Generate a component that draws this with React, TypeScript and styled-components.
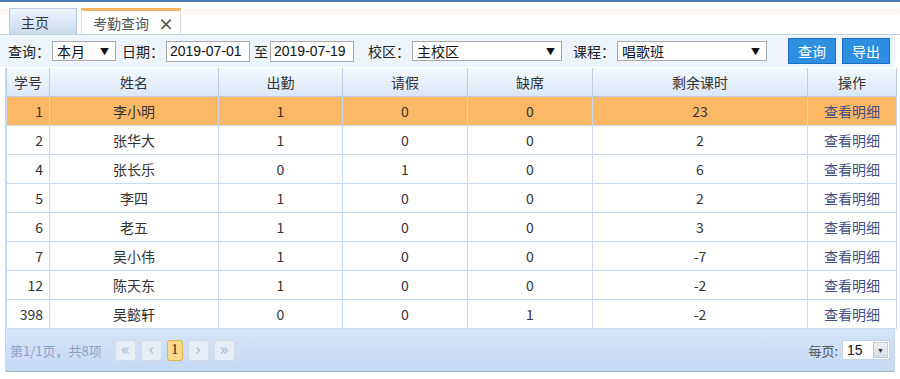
import styled, { createGlobalStyle } from 'styled-components'

const GlobalStyle = createGlobalStyle`
  body {
    margin: 0;
    background: #fff;
    font-family: "Noto Sans CJK SC", "Liberation Sans", sans-serif;
    font-size: 14px;
    color: #333;
  }
`

const Page = styled.div`
  width: 900px;
  height: 379px;
  border-top: 2px solid #4d7fb3;
  box-sizing: border-box;
  overflow: hidden;
`
const TabBar = styled.div`
  height: 32px;
  display: flex;
  align-items: flex-end;
  gap: 4px;
  padding-left: 9px;
  border-bottom: 1px solid #c3cfdc;
  background: linear-gradient(#fff 6px, #fdf6ec 8px, #fff 14px);
`
const Tab = styled.div<{ $active?: boolean }>`
  height: ${p => (p.$active ? 23 : 25)}px;
  display: flex;
  align-items: center;
  gap: 9px;
  padding: 0 ${p => (p.$active ? '6px 0 11px' : '11px')};
  box-sizing: content-box;
  border: 1px solid ${p => (p.$active ? '#d6dde6' : '#b8cce3')};
  border-bottom: none;
  border-top: ${p => (p.$active ? '3px solid #f3b463' : '1px solid #b8cce3')};
  background: ${p => (p.$active ? '#fff' : 'linear-gradient(#eef4fc, #c9dbef)')};
  color: ${p => (p.$active ? '#555' : '#333')};
  font-size: 14px;
  min-width: 44px;
`
const Close = styled.span`
  font-size: 16px;
  color: #555;
  font-weight: bold;
  line-height: 1;
`
const Toolbar = styled.div`
  height: 32px;
  display: flex;
  align-items: center;
  padding: 0 5px 0 8px;
  background: #eef4fb;
  margin-right: 5px;
`
const Label = styled.span<{ $ml?: number }>`
  margin-left: ${p => p.$ml || 0}px;
  margin-right: 2px;
  white-space: nowrap;
  color: #222;
`
const Select = styled.div<{ $w: number }>`
  width: ${p => p.$w}px;
  height: 20px;
  box-sizing: border-box;
  border: 1px solid #a9a9a9;
  background: #fff;
  display: flex;
  align-items: center;
  justify-content: space-between;
  padding: 0 6px 0 4px;
  font-size: 14px;
  color: #111;
  &::after {
    content: '▼';
    font-size: 9px;
    color: #111;
  }
`
const DateInput = styled.div`
  width: 84px;
  height: 21px;
  box-sizing: border-box;
  border: 1px solid #a9a9a9;
  background: #fff;
  display: flex;
  align-items: center;
  padding-left: 3px;
  font-family: "Liberation Sans", sans-serif;
  font-size: 14px;
  color: #111;
`
const Spacer = styled.div`
  flex: 1;
`
const Button = styled.button`
  width: 48px;
  height: 26px;
  margin-left: 6px;
  border: 1px solid #1c6ec2;
  background: #2e8fe0;
  color: #fff;
  font-family: "Noto Sans CJK SC", sans-serif;
  font-size: 14px;
  padding: 0;
`
const Panel = styled.div`
  margin: 1px 5px 0 5px;
  border-left: 1px solid #c7d8ec;
  border-right: 1px solid #c7d8ec;
`
const Table = styled.table`
  width: 100%;
  border-collapse: collapse;
  table-layout: fixed;
`
const Th = styled.th`
  height: 28px;
  padding: 0;
  font-weight: normal;
  font-size: 14px;
  color: #333;
  background: linear-gradient(#f3f8fe, #d9e7f8);
  border: 1px solid #b9cde6;
  border-top: none;
`
const Tr = styled.tr<{ $hl?: boolean }>`
  background: ${p => (p.$hl ? '#fdb865' : '#fff')};
`
const Td = styled.td<{ $align?: string }>`
  height: 28px;
  padding: 0 ${p => (p.$align === 'right' ? 6 : 0)}px 0 0;
  text-align: ${p => p.$align || 'center'};
  border: 1px solid #c9daee;
  font-size: 14px;
  color: #333;
`
const Link = styled.span`
  color: #3f4f85;
`
const Footer = styled.div`
  height: 42px;
  display: flex;
  align-items: center;
  padding: 0 4px 0 4px;
  background: linear-gradient(#d4e4f8, #c5daf4);
  border-bottom: 1px solid #a6b5c8;
`
const PageInfo = styled.span`
  color: #8ea3c4;
  font-size: 13px;
  margin-right: 13px;
`
const PageBtn = styled.span<{ $active?: boolean }>`
  width: ${p => (p.$active ? 14 : 19)}px;
  height: 19px;
  margin-right: 5px;
  display: flex;
  align-items: center;
  justify-content: center;
  border-radius: 3px;
  border: 1px solid ${p => (p.$active ? '#e2b451' : '#d2dcea')};
  background: ${p => (p.$active ? '#fdd98a' : '#e6edf6')};
  color: ${p => (p.$active ? '#222' : '#a9b4c4')};
  font-family: ${p => (p.$active ? '"Liberation Serif", serif' : '"DejaVu Sans", sans-serif')};
  font-size: ${p => (p.$active ? 14 : 15)}px;
  line-height: 1;
`
const PerPage = styled.span`
  color: #555;
  font-size: 13px;
  margin-right: 4px;
`
const PageSize = styled.div`
  width: 48px;
  height: 20px;
  box-sizing: border-box;
  border: 1px solid #c3d3e6;
  background: #fff;
  display: flex;
  align-items: center;
  padding-left: 4px;
  font-family: "Liberation Sans", sans-serif;
  font-size: 14px;
  color: #111;
`
const DropBtn = styled.span`
  margin-left: auto;
  width: 15px;
  height: 16px;
  margin-right: 1px;
  background: linear-gradient(#eef2f7, #d5dde8);
  border: 1px solid #c0ccdb;
  box-sizing: border-box;
  display: flex;
  align-items: center;
  justify-content: center;
  font-size: 7px;
  color: #333;
`

const rows = [
  [1, '李小明', 1, 0, 0, 23],
  [2, '张华大', 1, 0, 0, 2],
  [4, '张长乐', 0, 1, 0, 6],
  [5, '李四', 1, 0, 0, 2],
  [6, '老五', 1, 0, 0, 3],
  [7, '吴小伟', 1, 0, 0, -7],
  [12, '陈天东', 1, 0, 0, -2],
  [398, '吴懿轩', 0, 0, 1, -2],
]

const widths = [43, 169, 124, 125, 125, 215, 89]
const heads = ['学号', '姓名', '出勤', '请假', '缺席', '剩余课时', '操作']

export default function App() {
  return (
    <Page>
      <GlobalStyle />
      <TabBar>
        <Tab>主页</Tab>
        <Tab $active>考勤查询<Close>×</Close></Tab>
      </TabBar>
      <Toolbar>
        <Label>查询：</Label>
        <Select $w={64}>本月</Select>
        <Label $ml={6}>日期：</Label>
        <DateInput>2019-07-01</DateInput>
        <Label $ml={4}>至</Label>
        <DateInput>2019-07-19</DateInput>
        <Label $ml={14}>校区：</Label>
        <Select $w={150}>主校区</Select>
        <Label $ml={11}>课程：</Label>
        <Select $w={150}>唱歌班</Select>
        <Spacer />
        <Button>查询</Button>
        <Button>导出</Button>
      </Toolbar>
      <Panel>
        <Table>
          <colgroup>
            {widths.map((w, i) => <col key={i} style={{ width: w }} />)}
          </colgroup>
          <thead>
            <tr>{heads.map(h => <Th key={h}>{h}</Th>)}</tr>
          </thead>
          <tbody>
            {rows.map((r, i) => (
              <Tr key={i} $hl={i === 0}>
                <Td $align="right">{r[0]}</Td>
                <Td>{r[1]}</Td>
                <Td>{r[2]}</Td>
                <Td>{r[3]}</Td>
                <Td>{r[4]}</Td>
                <Td>{r[5]}</Td>
                <Td><Link>查看明细</Link></Td>
              </Tr>
            ))}
          </tbody>
        </Table>
        <Footer>
          <PageInfo>第1/1页，共8项</PageInfo>
          <PageBtn>«</PageBtn>
          <PageBtn>‹</PageBtn>
          <PageBtn $active>1</PageBtn>
          <PageBtn>›</PageBtn>
          <PageBtn>»</PageBtn>
          <Spacer />
          <PerPage>每页:</PerPage>
          <PageSize>15<DropBtn>▼</DropBtn></PageSize>
        </Footer>
      </Panel>
    </Page>
  )
}
